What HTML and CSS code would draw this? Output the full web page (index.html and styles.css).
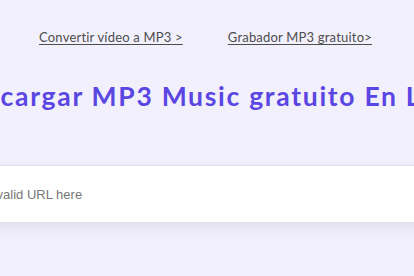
FILE: index.html
```html
<!DOCTYPE html>
<html lang="es">
<head>
<meta charset="utf-8">
<link rel="stylesheet" href="styles.css">
</head>
<body>
<main class="page">
  <nav class="links">
    <a class="link" href="#">Convertir vídeo a MP3 &gt;</a>
    <a class="link" href="#">Grabador MP3 gratuito&gt;</a>
  </nav>
  <div class="title-wrap">
    <h1 class="title">Descargar MP3 Music gratuito En Línea</h1>
  </div>
  <div class="search-wrap">
    <div class="search">
      <input class="search-input" type="text" placeholder="Please paste a valid URL here">
    </div>
  </div>
</main>
</body>
</html>
```
FILE: styles.css
```css
html, body {
  margin: 0;
  padding: 0;
  background: #f3f0fd;
  overflow: hidden;
}
.page {
  width: 414px;
  height: 276px;
  display: flex;
  flex-direction: column;
  align-items: center;
  font-family: Lato, "Open Sans", sans-serif;
}
.links {
  display: flex;
  gap: 45px;
  padding-top: 28px;
  height: 18px;
  margin-right: 3px;
}
.link {
  color: #4d4d4d;
  font-size: 13px;
  line-height: 18px;
  letter-spacing: 0.2px;
  text-decoration: underline;
  text-underline-offset: 2px;
}
.title-wrap {
  width: 414px;
  display: flex;
  justify-content: center;
  margin-top: 33px;
}
.title {
  margin: 0 0 0 13px;
  flex: none;
  white-space: nowrap;
  font-size: 26.5px;
  line-height: 34px;
  font-weight: 700;
  letter-spacing: 1.7px;
  color: #5a46e2;
}
.search-wrap {
  width: 414px;
  display: flex;
  justify-content: center;
  margin-top: 52px;
}
.search {
  flex: none;
  width: 640px;
  height: 57px;
  background: #fff;
  border-top: 1px solid #e2deec;
  box-sizing: border-box;
  box-shadow: 0 6px 12px rgba(60, 50, 110, 0.10);
  display: flex;
  align-items: center;
}
.search-input {
  flex: 1;
  border: none;
  outline: none;
  background: transparent;
  padding: 0 20px;
  font-family: "Liberation Sans", Arial, sans-serif;
  font-size: 13px;
  color: #333;
}
.search-input::placeholder {
  color: #777;
}
```
